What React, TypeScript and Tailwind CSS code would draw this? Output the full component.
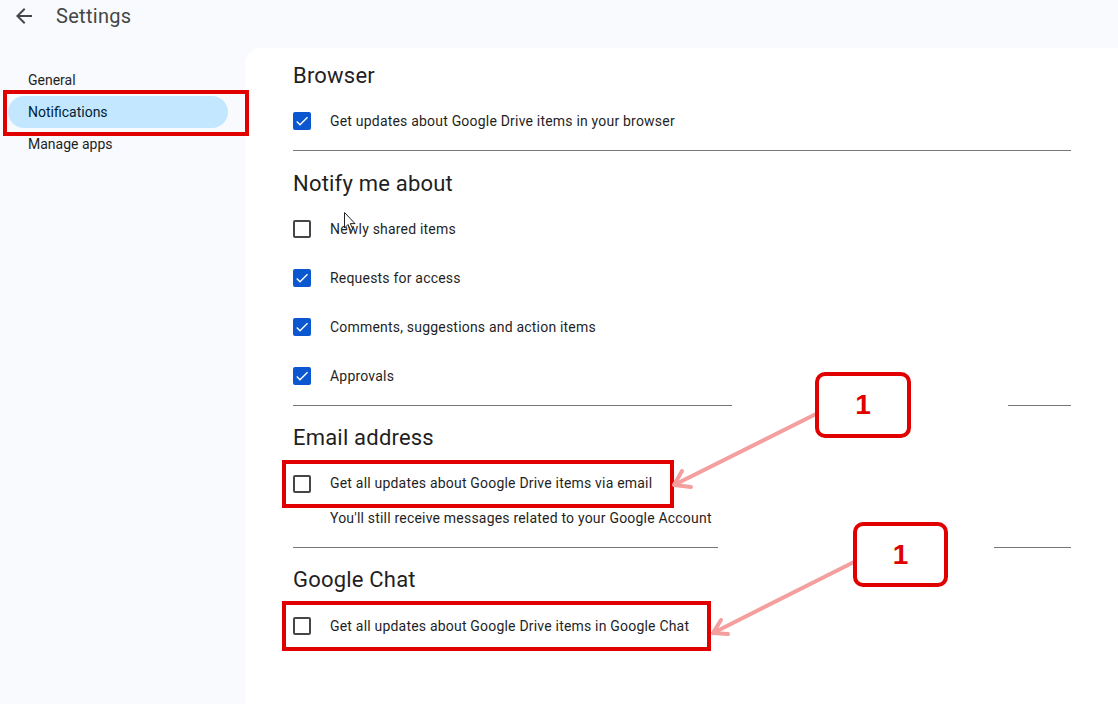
import React from "react";

const font = { fontFamily: "Roboto, 'Liberation Sans', Arial, sans-serif" };

function Checkbox({ checked }: { checked: boolean }) {
  if (checked) {
    return (
      <div className="w-[18px] h-[18px] rounded-[2px] bg-[#0b57d0] flex items-center justify-center shrink-0">
        <svg viewBox="0 0 24 24" className="w-[16px] h-[16px]" fill="white">
          <path d="M9 16.17L4.83 12l-1.42 1.41L9 19 21 7l-1.41-1.41z" />
        </svg>
      </div>
    );
  }
  return <div className="w-[18px] h-[18px] rounded-[2px] border-2 border-[#444746] shrink-0" />;
}

function Row({ checked, label }: { checked: boolean; label: string }) {
  return (
    <div className="h-[49px] flex items-center">
      <Checkbox checked={checked} />
      <span className="ml-[19px] text-[14px] tracking-[0.2px] text-[#1f1f1f] leading-5">{label}</span>
    </div>
  );
}

function Heading({ children, className = "" }: { children: React.ReactNode; className?: string }) {
  return <div className={"text-[22px] leading-7 tracking-[0.2px] text-[#1f1f1f] " + className}>{children}</div>;
}

export default function App() {
  return (
    <div className="relative w-[1118px] h-[704px] bg-[#f8fafd] overflow-hidden" style={font}>
      {/* header */}
      <div className="h-[48px] flex items-start">
        <div className="h-8 flex items-center pl-3">
          <svg viewBox="0 0 24 24" className="w-6 h-6" fill="#444746">
            <path d="M20 11H7.83l5.59-5.59L12 4l-8 8 8 8 1.41-1.41L7.83 13H20v-2z" />
          </svg>
          <span className="ml-5 text-[20px] tracking-[0.3px] text-[#444746]">Settings</span>
        </div>
      </div>

      <div className="flex h-[656px]">
        {/* sidebar */}
        <div className="w-[245px] pt-4 pl-2">
          <div className="h-8 flex items-center pl-5 text-[14px] text-[#1f1f1f]">General</div>
          <div className="h-8 w-[220px] flex items-center pl-5 text-[14px] text-[#001d35] bg-[#c2e7ff] rounded-full">
            Notifications
          </div>
          <div className="h-8 flex items-center pl-5 text-[14px] text-[#1f1f1f]">Manage apps</div>
        </div>

        {/* content panel */}
        <div className="flex-1 bg-white rounded-tl-2xl pl-12 pr-[47px] pt-[14px]">
          <Heading>Browser</Heading>
          <div className="mt-[6px]">
            <Row checked label="Get updates about Google Drive items in your browser" />
          </div>
          <div className="mt-[5px] h-px bg-[#747775]" />

          <Heading className="mt-[19px]">Notify me about</Heading>
          <div className="mt-[6px]">
            <Row checked={false} label="Newly shared items" />
            <Row checked label="Requests for access" />
            <Row checked label="Comments, suggestions and action items" />
            <Row checked label="Approvals" />
          </div>
          <div className="mt-[5px] h-px bg-[#747775]" />

          <Heading className="mt-[18px]">Email address</Heading>
          <div className="mt-[7px]">
            <div className="h-[49px] flex items-center">
              <Checkbox checked={false} />
              <span className="ml-[19px] text-[14px] tracking-[0.2px] text-[#1f1f1f]">Get all updates about Google Drive items via email</span>
            </div>
            <div className="pl-[37px] text-[14px] leading-5 tracking-[0.2px] text-[#1f1f1f]">
              You'll still receive messages related to your Google Account
            </div>
          </div>
          <div className="mt-[19px] h-px bg-[#747775]" />

          <Heading className="mt-[18px]">Google Chat</Heading>
          <div className="mt-[7px]">
            <Row checked={false} label="Get all updates about Google Drive items in Google Chat" />
          </div>
        </div>
      </div>

      {/* annotation overlays */}
      <div className="absolute left-[732px] top-[400px] w-[276px] h-[10px] bg-white" />
      <div className="absolute left-[718px] top-[542px] w-[276px] h-[10px] bg-white" />

      <div className="absolute left-[3px] top-[90px] w-[246px] h-[46px] border-4 border-[#e00000]" />
      <div className="absolute left-[282px] top-[460px] w-[392px] h-[48px] border-4 border-[#e00000]" />
      <div className="absolute left-[282px] top-[601px] w-[429px] h-[50px] border-4 border-[#e00000]" />

      <svg className="absolute left-0 top-0 w-[1118px] h-[704px] pointer-events-none" viewBox="0 0 1118 704">
        <g stroke="#f59e9e" strokeWidth="4" strokeLinecap="round" strokeLinejoin="round" fill="none">
          <line x1="816" y1="414" x2="676" y2="484" />
          <polyline points="682,471 674,485 691,487" />
          <line x1="854" y1="562" x2="715" y2="632" />
          <polyline points="721,620 713,633 728,634" />
        </g>
        {/* mouse cursor */}
        <path d="M344.5 212.5 L344.5 228 L348 224.5 L350.8 230.5 L353 229.5 L350.3 223.6 L355 223.6 Z" fill="white" stroke="#222" strokeWidth="1" />
      </svg>

      <div className="absolute left-[815px] top-[372px] w-[96px] h-[66px] border-[4px] border-[#e00000] rounded-[10px] bg-white flex items-center justify-center">
        <span className="text-[28px] font-bold text-[#e00000]" style={{ fontFamily: "'Liberation Sans', Arial, sans-serif" }}>1</span>
      </div>
      <div className="absolute left-[853px] top-[522px] w-[95px] h-[65px] border-[4px] border-[#e00000] rounded-[10px] bg-white flex items-center justify-center">
        <span className="text-[28px] font-bold text-[#e00000]" style={{ fontFamily: "'Liberation Sans', Arial, sans-serif" }}>1</span>
      </div>
    </div>
  );
}
